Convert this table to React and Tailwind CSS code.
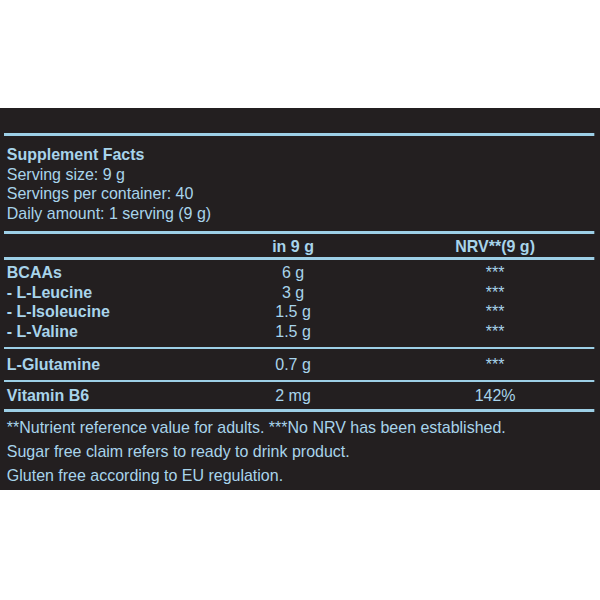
import React from 'react';

const rows = [
  { name: 'BCAAs', amount: '6 g', nrv: '***' },
  { name: '- L-Leucine', amount: '3 g', nrv: '***' },
  { name: '- L-Isoleucine', amount: '1.5 g', nrv: '***' },
  { name: '- L-Valine', amount: '1.5 g', nrv: '***' },
];

function Row({ name, amount, nrv, className = '' }) {
  return (
    <div className={`grid grid-cols-[245px_125px_1fr] ${className}`}>
      <div className="pl-[3px] font-bold">{name}</div>
      <div className="text-center">{amount}</div>
      <div className="pl-[47px] text-center">{nrv}</div>
    </div>
  );
}

export default function App() {
  return (
    <div className="w-[600px] h-[600px] bg-white pt-[108px]">
      <div className="bg-[#231f20] h-[382px] pt-[25px] px-[4px] text-[#a8d4eb] font-['Liberation_Sans',Arial,sans-serif] text-[17px]">
        {/* condensed look: slightly narrowed type */}
        <div className="w-[628px] origin-left scale-x-[0.94]">
          <div className="h-[3px] bg-[#9dcfe6]" />

          <div className="pt-[9px] pb-[8px] pl-[3px] leading-[19.5px]">
            <div className="font-bold">Supplement Facts</div>
            <div>Serving size: 9 g</div>
            <div>Servings per container: 40</div>
            <div>Daily amount: 1 serving (9 g)</div>
          </div>

          <div className="h-[3px] bg-[#9dcfe6]" />
          <div className="grid grid-cols-[245px_125px_1fr] h-[23px] items-center font-bold">
            <div />
            <div className="text-center">in 9 g</div>
            <div className="pl-[47px] text-center">NRV**(9 g)</div>
          </div>
          <div className="h-[3px] bg-[#9dcfe6]" />

          <div className="pt-[3px] pb-[6px] leading-[19.5px]">
            {rows.map((r) => (
              <Row key={r.name} {...r} />
            ))}
          </div>

          <div className="h-[2px] bg-[#9dcfe6]" />
          <Row name="L-Glutamine" amount="0.7 g" nrv="***" className="h-[31px] items-center" />
          <div className="h-[2px] bg-[#9dcfe6]" />
          <Row name="Vitamin B6" amount="2 mg" nrv="142%" className="h-[27px] items-center" />
          <div className="h-[3px] bg-[#9dcfe6]" />

          {/* Footnotes */}
          <div className="pt-[4px] pl-[3px] leading-[24px]">
            <div>**Nutrient reference value for adults. ***No NRV has been established.</div>
            <div>Sugar free claim refers to ready to drink product.</div>
            <div>Gluten free according to EU regulation.</div>
          </div>
        </div>
      </div>
    </div>
  );
}
